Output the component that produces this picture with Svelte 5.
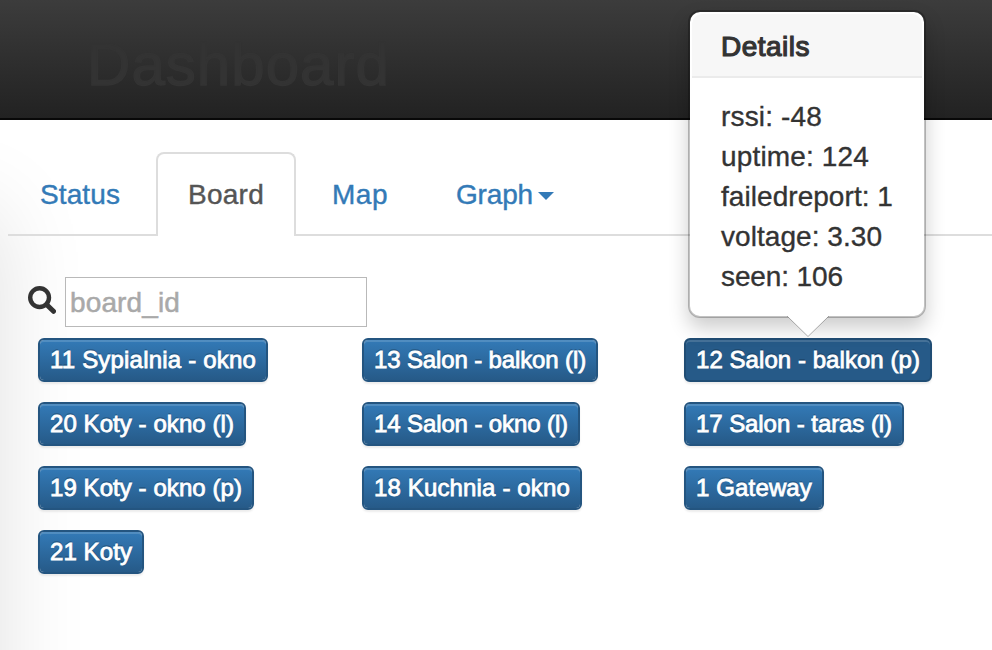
<script>
  const tabs = [
    { label: 'Status', width: 80 },
    { label: 'Board', width: 76, active: true },
    { label: 'Map', width: 56 },
    { label: 'Graph', width: 77, caret: true }
  ];

  const columns = [
    [
      { name: '11 Sypialnia - okno', width: 206 },
      { name: '20 Koty - okno (l)', width: 184 },
      { name: '19 Koty - okno (p)', width: 192 },
      { name: '21 Koty', width: 82 }
    ],
    [
      { name: '13 Salon - balkon (l)', width: 212 },
      { name: '14 Salon - okno (l)', width: 194 },
      { name: '18 Kuchnia - okno', width: 196 }
    ],
    [
      { name: '12 Salon - balkon (p)', width: 224, pressed: true },
      { name: '17 Salon - taras (l)', width: 196 },
      { name: '1 Gateway', width: 116 }
    ]
  ];

  const details = [
    { text: 'rssi: -48', width: 101 },
    { text: 'uptime: 124', width: 148 },
    { text: 'failedreport: 1', width: 172 },
    { text: 'voltage: 3.30', width: 161 },
    { text: 'seen: 106', width: 122 }
  ];

  // Tracks a label so that it fills the given width.
  function fit(node, width) {
    const natural = node.getBoundingClientRect().width;
    node.style.letterSpacing = `${(width - natural) / node.textContent.length}px`;
  }
</script>

<div class="page">
  <header><h1><span use:fit={303}>Dashboard</span></h1></header>
  <div class="edge"></div>
  <main>
    <nav>
      {#each tabs as tab}
        <a href="#tab" class:active={tab.active}>
          <span use:fit={tab.width}>{tab.label}</span>{#if tab.caret}<i class="caret"></i>{/if}
        </a>
      {/each}
    </nav>
    <div class="search">
      <svg width="28" height="28" viewBox="0 0 28 28">
        <circle cx="11.6" cy="11.6" r="9.4" fill="none" stroke="#333" stroke-width="4.4" />
        <path d="M18.5 18.5 L25.5 25.3" stroke="#333" stroke-width="5" stroke-linecap="round" />
      </svg>
      <div class="input"><span use:fit={110}>board_id</span></div>
    </div>
    <div class="grid">
      {#each columns as column}
        <div class="column">
          {#each column as board}
            <button class:pressed={board.pressed}><span use:fit={board.width}>{board.name}</span></button>
          {/each}
        </div>
      {/each}
    </div>
  </main>
  <aside class="popover">
    <h3><span use:fit={89}>Details</span></h3>
    <div class="body">
      {#each details as line}
        <div><span use:fit={line.width}>{line.text}</span></div>
      {/each}
    </div>
    <svg class="arrow" width="44" height="22" viewBox="0 0 44 22">
      <path d="M1 0 H43 V1 L22 21.5 L1 1Z" fill="#fff" />
      <path d="M1 1 L22 21.5 L43 1" fill="none" stroke="#000" stroke-opacity=".3" />
    </svg>
  </aside>
</div>

<style>
  :global(body) { background: #fff; }
  .page {
    position: relative;
    width: 992px;
    height: 650px;
    overflow: hidden;
    box-sizing: border-box;
    font: 28px/40px "Liberation Sans", Arial, sans-serif;
    color: #333;
  }
  .page span { display: inline-block; white-space: pre; }
  header {
    position: relative;
    z-index: 1;
    height: 118px;
    padding-left: 87px;
    border-bottom: 2px solid #080808;
    background: linear-gradient(#3c3c3c, #222);
  }
  h1 { margin: 0; padding-top: 32px; font-size: 60px; line-height: 66px; font-weight: 400; -webkit-text-stroke: 1.4px #333; }
  .edge {
    position: absolute;
    left: -200px;
    top: 210px;
    width: 200px;
    height: 600px;
    box-shadow: 0 0 90px rgba(0, 0, 0, .12);
  }
  main { position: relative; padding: 32px 0 0 8px; }
  nav { display: flex; gap: 4px; height: 82px; border-bottom: 2px solid #ddd; }
  nav a {
    display: flex;
    align-items: flex-start;
    height: 39px;
    padding: 21px 30px 20px;
    border: 2px solid transparent;
    border-bottom: 0;
    border-radius: 8px 8px 0 0;
    color: #337ab7;
    text-decoration: none;
    -webkit-text-stroke: .4px;
  }
  nav a.active { height: 41px; color: #555; background: #fff; border-color: #ddd; }
  .caret { margin: 17px 0 0 5px; border: 8px solid transparent; border-top-color: #337ab7; border-bottom: 0; }
  .search { display: flex; align-items: flex-start; padding: 41px 0 0 20px; }
  .search svg { margin: 9px 9px 0 0; }
  .input {
    box-sizing: border-box;
    width: 302px;
    height: 50px;
    padding: 5px 4px;
    border: 1px solid #b9b9b9;
    background: #fff;
    color: #a9a9a9;
    -webkit-text-stroke: .5px;
  }
  .grid { display: grid; grid-template-columns: 324px 322px 300px; padding: 11px 0 0 30px; }
  .column { display: flex; flex-direction: column; align-items: flex-start; gap: 20px; }
  button {
    box-sizing: border-box;
    height: 44px;
    margin: 0;
    padding: 0 10px;
    border: 2px solid #245580;
    border-radius: 6px;
    background: linear-gradient(#337ab7, #265a88) padding-box;
    box-shadow: inset 0 2px 0 rgba(255, 255, 255, .15), 0 2px 2px rgba(0, 0, 0, .075);
    font: 24px/36px "Liberation Sans", Arial, sans-serif;
    color: #fff;
    text-shadow: 0 -2px 0 rgba(0, 0, 0, .2);
    -webkit-text-stroke: .8px #fff;
  }
  button span { display: block; height: 40px; line-height: 39px; }
  button.pressed { background: #265a88; border-color: #204d74; }
  .popover {
    position: absolute;
    left: 688px;
    top: 10px;
    box-sizing: border-box;
    width: 238px;
    height: 308px;
    padding: 2px;
    border: 2px solid rgba(0, 0, 0, .24);
    border-radius: 12px;
    background: #fff padding-box;
    box-shadow: 0 10px 20px rgba(0, 0, 0, .2);
    z-index: 2;
  }
  h3 {
    margin: 0;
    height: 62px;
    padding-left: 29px;
    border-bottom: 2px solid #ebebeb;
    border-radius: 10px 10px 0 0;
    background: #f7f7f7;
    font-size: 28px;
    line-height: 66px;
    font-weight: 400;
    -webkit-text-stroke: 1.2px #333;
  }
  h3 span { height: 62px; }
  .body { padding: 19px 0 0 29px; -webkit-text-stroke: .35px; }
  .arrow { position: absolute; left: 96px; top: 303px; }
</style>
